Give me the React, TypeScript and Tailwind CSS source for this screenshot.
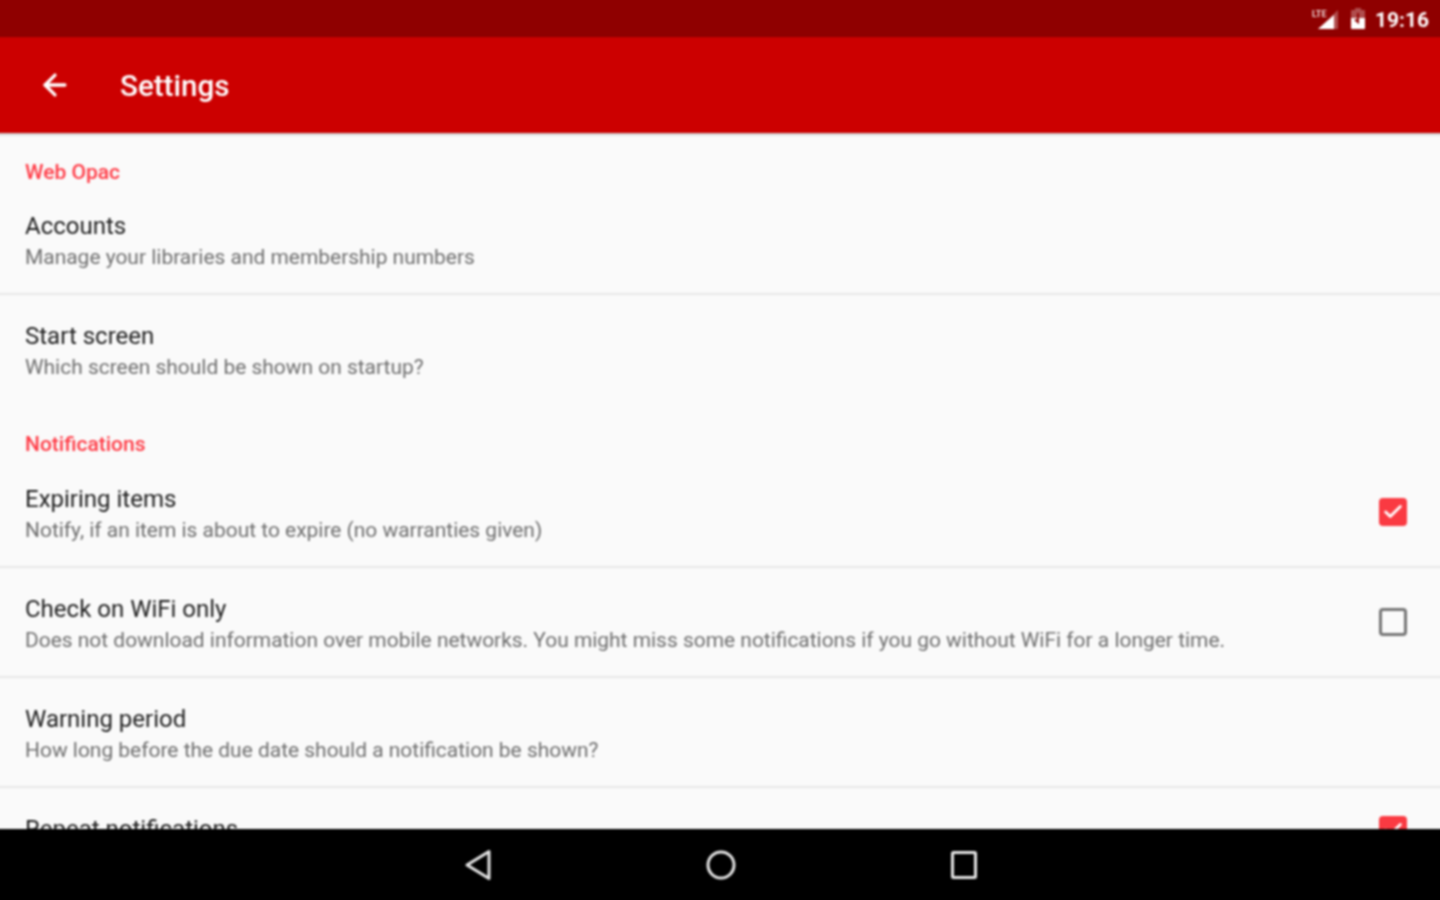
import { ArrowLeft, Check } from "lucide-react"

type Pref = {
  title: string
  summary?: string
  checked?: boolean
  divider?: boolean
  boxHigh?: boolean
}

const webOpac: Pref[] = [
  { title: "Accounts", summary: "Manage your libraries and membership numbers", divider: true },
  { title: "Start screen", summary: "Which screen should be shown on startup?" },
]

const notifications: Pref[] = [
  { title: "Expiring items", summary: "Notify, if an item is about to expire (no warranties given)", checked: true, divider: true },
  {
    title: "Check on WiFi only",
    summary: "Does not download information over mobile networks. You might miss some notifications if you go without WiFi for a longer time.",
    checked: false,
    divider: true,
  },
  { title: "Warning period", summary: "How long before the due date should a notification be shown?", divider: true },
  { title: "Repeat notifications", checked: true, boxHigh: true },
]

// the page is blurred as a whole, so the bars bleed 4px past the window edge
function StatusBar() {
  return (
    <div className="flex h-[41px] shrink-0 items-center justify-end bg-[#8f0000] pr-[15px] pt-[4px] text-white">
      <svg width="30" height="24" viewBox="0 0 30 24" className="mr-[8px]" aria-hidden>
        <path d="M26 3v19H6z" fill="white" fillOpacity="0.3" />
        <path d="M22 8v14H6z" fill="white" />
        <text x="0" y="10" fontSize="9" fontWeight="700" fill="white" fillOpacity="0.85" fontFamily="Roboto, sans-serif">
          LTE
        </text>
      </svg>
      <svg width="16" height="22" viewBox="0 0 16 22" className="mb-[2px] mr-[9px]" aria-hidden>
        <path d="M5 1h6v2h3a1 1 0 0 1 1 1v17a1 1 0 0 1-1 1H2a1 1 0 0 1-1-1V4a1 1 0 0 1 1-1h3z" fill="white" fillOpacity="0.3" />
        <path d="M1 11h14v10a1 1 0 0 1-1 1H2a1 1 0 0 1-1-1z" fill="white" />
        <path d="M8 6v9l-3-2.5" stroke="#8f0000" strokeWidth="2" fill="none" />
      </svg>
      <span className="mt-[3px] font-['Roboto',sans-serif] text-[21px] font-bold leading-none">19:16</span>
    </div>
  )
}

function AppBar() {
  return (
    <div className="relative z-10 flex h-[96px] shrink-0 items-center bg-[#cc0000] pl-[42px] text-white shadow-[0_1px_3px_rgba(0,0,0,0.3)]">
      <ArrowLeft className="h-[34px] w-[34px]" strokeWidth={2.3} aria-hidden />
      <h1 className="ml-[48px] mt-[3px] font-['Roboto',sans-serif] text-[29.6px] font-medium leading-none">Settings</h1>
    </div>
  )
}

function SectionHeader({ label, className }: { label: string; className: string }) {
  return (
    <div className={`${className} pl-[29px] pt-[26px] font-['Roboto',sans-serif] text-[21px] font-medium leading-[26px] text-[#ff3b46]`}>
      {label}
    </div>
  )
}

function PrefRow({ pref }: { pref: Pref }) {
  return (
    <div className={`flex h-[110px] items-start justify-between pl-[29px] pr-[37px] pt-[26px] ${pref.divider ? "border-b-2 border-[#e8e8e8]" : ""}`}>
      <div className="font-['Roboto',sans-serif]">
        <div className="text-[24px] leading-[30px] text-[#1f1f1f]">{pref.title}</div>
        {pref.summary && <div className="mt-[1px] text-[20.95px] leading-[30px] text-[#6f6f6f]">{pref.summary}</div>}
      </div>
      {pref.checked === true && (
        <span className={`flex h-[28px] w-[28px] items-center justify-center rounded-[4px] bg-[#fa3a42] ${pref.boxHigh ? "mt-[2px]" : "mt-[14px]"}`}>
          <Check className="h-[22px] w-[22px] text-white" strokeWidth={3} aria-hidden />
        </span>
      )}
      {pref.checked === false && (
        <span className="mt-[14px] h-[28px] w-[28px] rounded-[4px] border-[3px] border-[#757575]" />
      )}
    </div>
  )
}

function NavBar() {
  return (
    <div className="relative z-10 flex h-[75px] shrink-0 items-center justify-center gap-[215px] bg-black pb-[4px] pl-[1px]">
      <svg width="26" height="32" viewBox="0 0 26 32" aria-hidden>
        <path d="M24 2.5v27L2 16z" fill="none" stroke="#e6e6e6" strokeWidth="3" strokeLinejoin="round" />
      </svg>
      <svg width="30" height="30" viewBox="0 0 30 30" aria-hidden>
        <circle cx="15" cy="15" r="13" fill="none" stroke="#e6e6e6" strokeWidth="3" />
      </svg>
      <svg width="26" height="28" viewBox="0 0 26 28" aria-hidden>
        <rect x="1.5" y="1.5" width="23" height="25" rx="1" fill="none" stroke="#e6e6e6" strokeWidth="3" />
      </svg>
    </div>
  )
}

export default function App() {
  return (
    <div className="h-screen overflow-hidden">
      <div className="-mx-[4px] -mt-[4px] flex h-[calc(100vh+8px)] flex-col bg-[#fafafa] blur-[0.8px]">
        <StatusBar />
        <AppBar />
        <div className="min-h-0 flex-1 overflow-hidden">
          <SectionHeader label="Web Opac" className="h-[52px]" />
          {webOpac.map((pref) => (
            <PrefRow key={pref.title} pref={pref} />
          ))}
          <SectionHeader label="Notifications" className="h-[53px]" />
          {notifications.map((pref) => (
            <PrefRow key={pref.title} pref={pref} />
          ))}
        </div>
        <NavBar />
      </div>
    </div>
  )
}
